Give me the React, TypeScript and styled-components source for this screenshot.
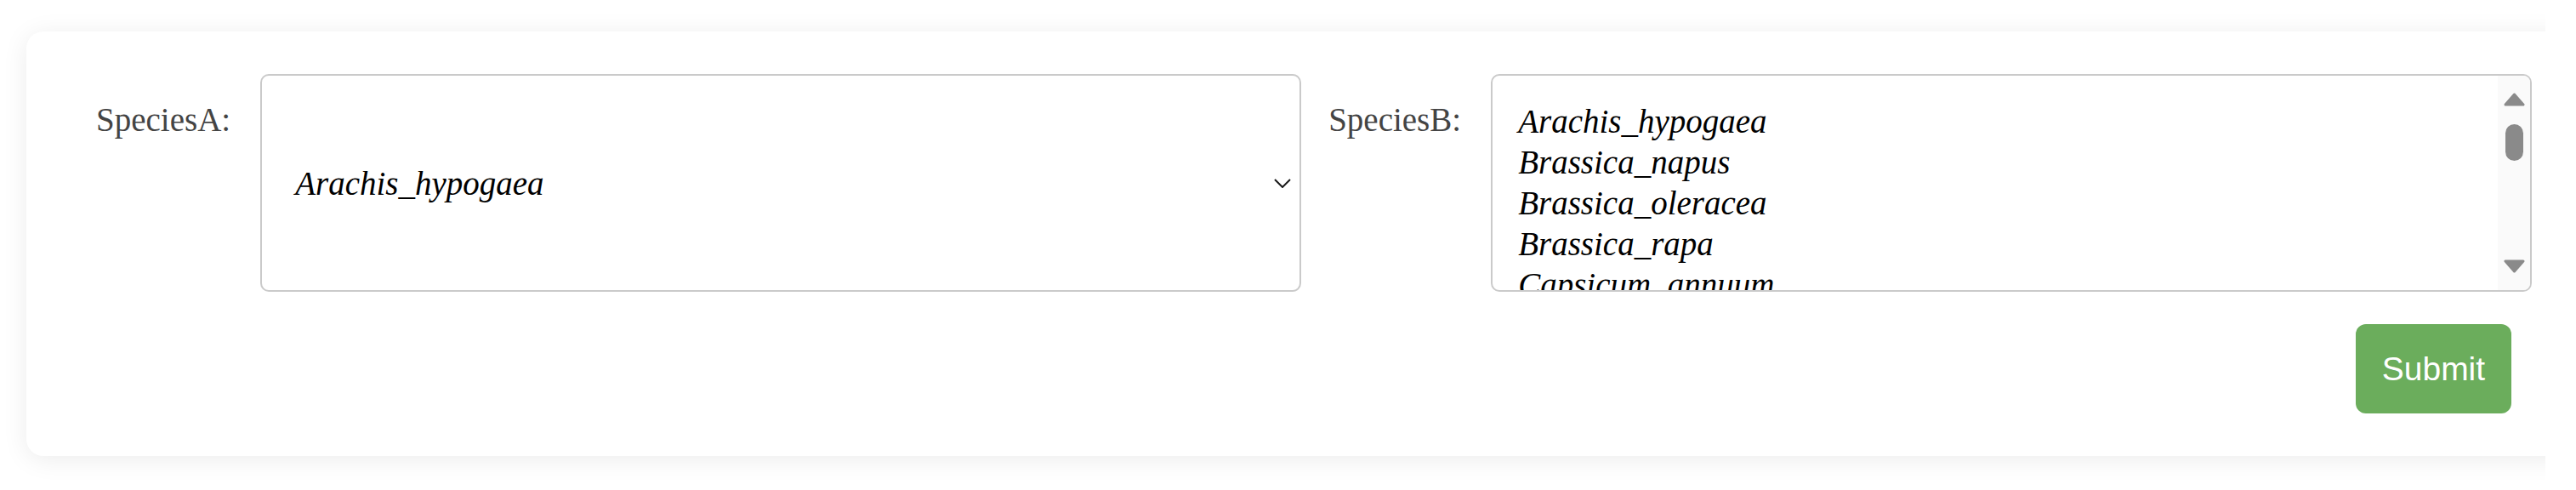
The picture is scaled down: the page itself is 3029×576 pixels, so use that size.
import React from 'react'
import styled, { createGlobalStyle } from 'styled-components'

const GlobalStyle = createGlobalStyle`
  body {
    margin: 0;
    background: #ffffff;
  }
`

const Page = styled.div`
  box-sizing: border-box;
  width: 2993px;
  height: 576px;
  padding: 37px 0 0 31px;
  overflow: hidden;
`

const Card = styled.div`
  box-sizing: border-box;
  width: 3100px;
  height: 499px;
  padding: 50px 0 0 82px;
  background: #ffffff;
  border-radius: 20px;
  box-shadow: 0 4px 30px rgba(0, 0, 0, 0.08);
`

const Form = styled.form`
  display: flex;
  flex-direction: column;
  width: max-content;
  margin: 0;
`

const Row = styled.div`
  display: flex;
  gap: 32px;
`

const Field = styled.div`
  display: flex;
  align-items: flex-start;
  gap: 35px;
`

const Label = styled.label`
  padding-top: 31px;
  font-family: 'Liberation Serif', 'Times New Roman', serif;
  font-size: 39px;
  color: #444444;
`

const SelectBox = styled.div`
  box-sizing: border-box;
  width: 1224px;
  height: 256px;
  display: flex;
  align-items: center;
  justify-content: space-between;
  padding: 0 10px 0 39px;
  border: 2px solid #cacaca;
  border-radius: 10px;
  font-family: 'Liberation Serif', 'Times New Roman', serif;
  font-style: italic;
  font-size: 39px;
  color: #000000;
`

const ListBox = styled.div`
  box-sizing: border-box;
  width: 1224px;
  height: 256px;
  display: flex;
  border: 2px solid #cacaca;
  border-radius: 10px;
  overflow: hidden;
`

const Options = styled.div`
  flex: 1;
  padding: 30px 0 0 30px;
  overflow: hidden;
`

const Option = styled.div`
  height: 48px;
  line-height: 48px;
  white-space: nowrap;
  font-family: 'Liberation Serif', 'Times New Roman', serif;
  font-style: italic;
  font-size: 39px;
  color: #000000;
`

const Track = styled.div`
  width: 38px;
  display: flex;
  flex-direction: column;
  align-items: center;
  background: #fafafa;
`

const Thumb = styled.div`
  width: 21px;
  height: 43px;
  margin-top: 21px;
  border-radius: 11px;
  background: #8a8a8a;
`

const Arrow = styled.svg<{ $down?: boolean }>`
  width: 25px;
  height: 16px;
  margin-top: ${(p) => (p.$down ? 'auto' : '20px')};
  margin-bottom: ${(p) => (p.$down ? '20px' : '0')};
  transform: ${(p) => (p.$down ? 'rotate(180deg)' : 'none')};
`

const Actions = styled.div`
  display: flex;
  justify-content: flex-end;
  margin-top: 38px;
  padding-right: 24px;
`

const SubmitButton = styled.button`
  height: 105px;
  padding: 0 31px;
  border: none;
  border-radius: 12px;
  background: #6bad5c;
  color: #ffffff;
  font-family: 'Liberation Sans', Arial, sans-serif;
  font-size: 39px;
  cursor: pointer;
`

const species = ['Arachis_hypogaea', 'Brassica_napus', 'Brassica_oleracea', 'Brassica_rapa', 'Capsicum_annuum', 'Citrullus_lanatus']

const ScrollArrow = ({ down }: { down?: boolean }) => (
  <Arrow $down={down} viewBox="0 0 25 16">
    <path d="M12.5 2 L23 14 L2 14 Z" fill="#8a8a8a" stroke="#8a8a8a" strokeWidth="3" strokeLinejoin="round" />
  </Arrow>
)

const App: React.FC = () => {
  return (
    <>
      <GlobalStyle />
      <Page>
        <Card>
          <Form onSubmit={(e) => e.preventDefault()}>
            <Row>
              <Field>
                <Label>SpeciesA:</Label>
                <SelectBox>
                  <span>Arachis_hypogaea</span>
                  <svg width="20" height="11" viewBox="0 0 20 11">
                    <path d="M1 1 L10 10 L19 1" fill="none" stroke="#1a1a1a" strokeWidth="2" />
                  </svg>
                </SelectBox>
              </Field>
              <Field>
                <Label>SpeciesB:</Label>
                <ListBox>
                  <Options>
                    {species.map((s) => (
                      <Option key={s}>{s}</Option>
                    ))}
                  </Options>
                  <Track>
                    <ScrollArrow />
                    <Thumb />
                    <ScrollArrow down />
                  </Track>
                </ListBox>
              </Field>
            </Row>
            <Actions>
              <SubmitButton type="submit">Submit</SubmitButton>
            </Actions>
          </Form>
        </Card>
      </Page>
    </>
  )
}

export default App
